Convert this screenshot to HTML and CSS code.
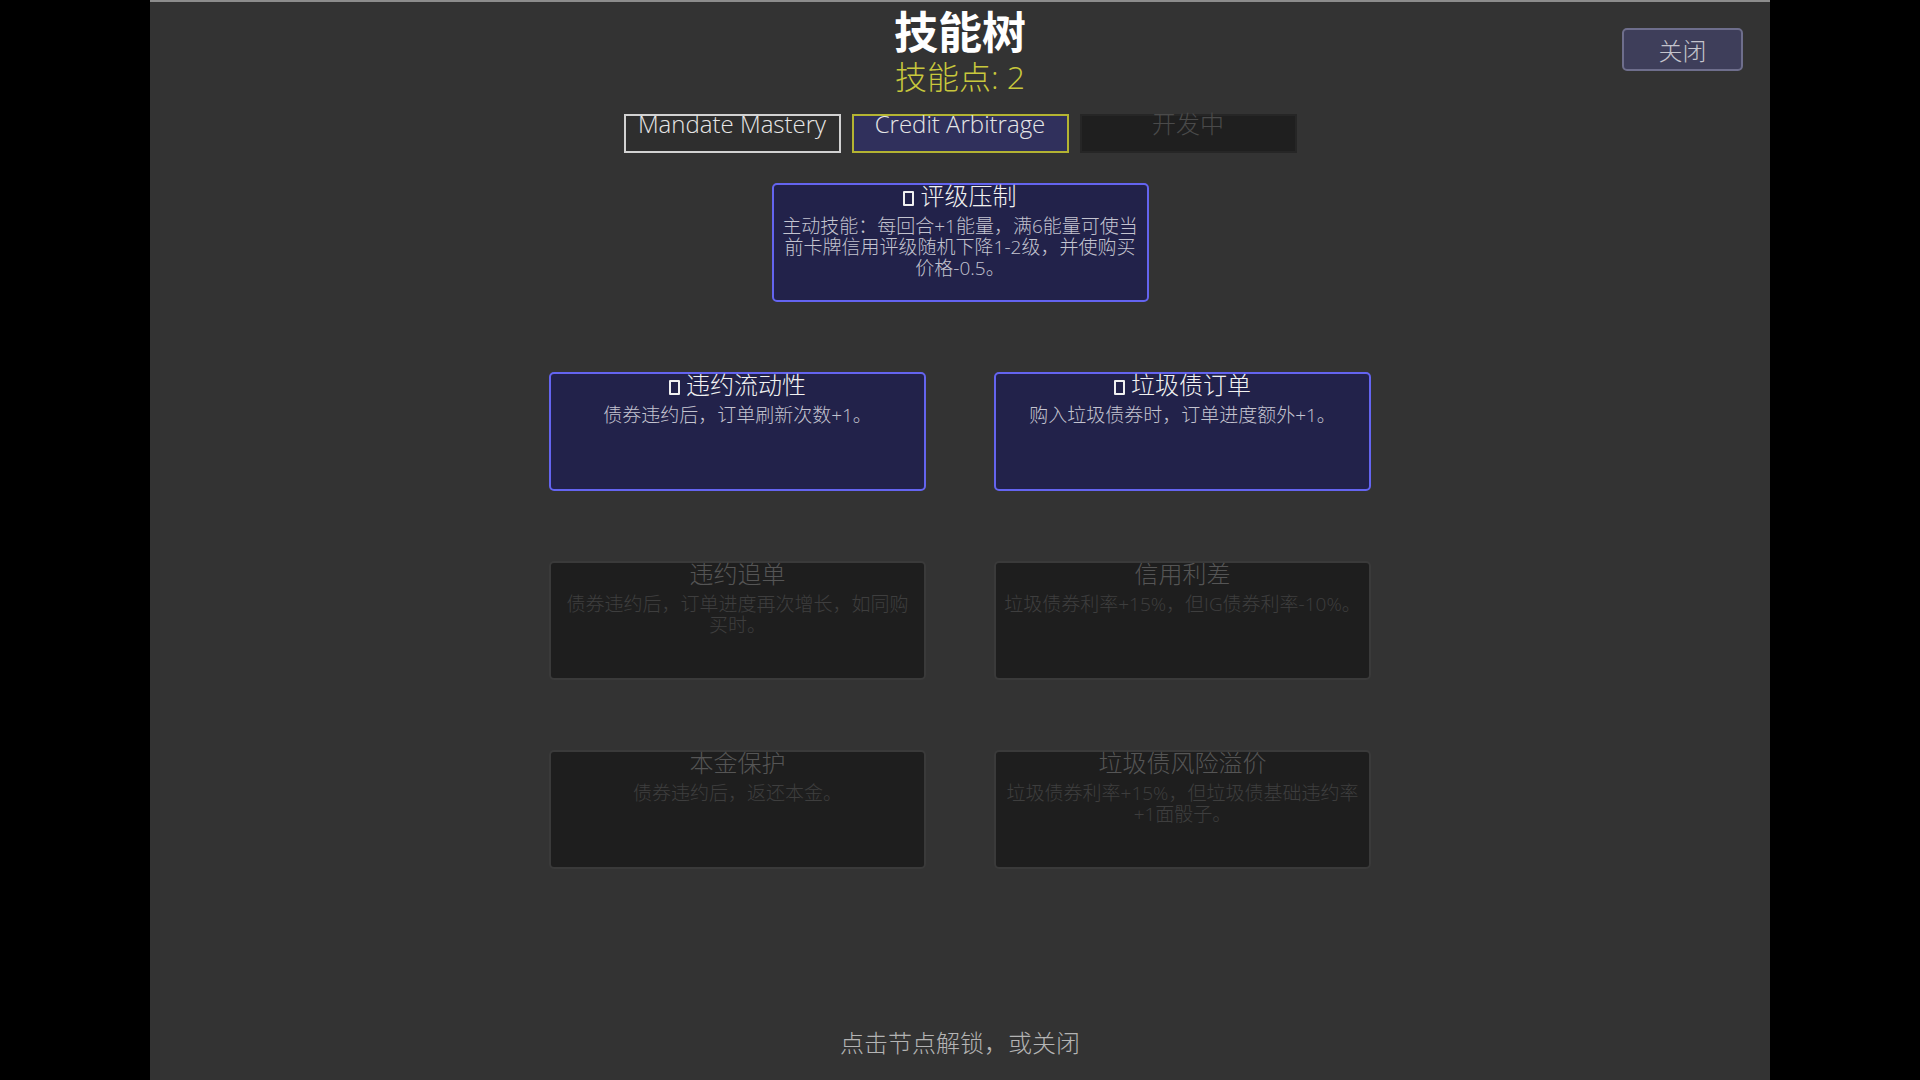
FILE: index.html
```html
<!DOCTYPE html>
<html lang="zh-CN">
<head>
<meta charset="utf-8">
<title>技能树</title>
<link rel="stylesheet" href="styles.css">
</head>
<body>
<div class="stage">
  <main class="panel">
    <header class="header">
      <div class="header-side"></div>
      <div class="header-center">
        <h1 class="title">技能树</h1>
        <div class="points">技能点: 2</div>
      </div>
      <div class="header-side header-right">
        <button class="close-btn">关闭</button>
      </div>
    </header>

    <nav class="tabs">
      <div class="tab tab-normal">Mandate Mastery</div>
      <div class="tab tab-active">Credit Arbitrage</div>
      <div class="tab tab-disabled">开发中</div>
    </nav>

    <section class="tree">
      <div class="node node-open node-root">
        <div class="node-title"><span class="tofu"></span> 评级压制</div>
        <div class="node-desc">主动技能：每回合+1能量，满6能量可使当前卡牌信用评级随机下降1-2级，并使购买价格-0.5。</div>
      </div>

      <div class="node node-open">
        <div class="node-title"><span class="tofu"></span> 违约流动性</div>
        <div class="node-desc">债券违约后，订单刷新次数+1。</div>
      </div>
      <div class="node node-open">
        <div class="node-title"><span class="tofu"></span> 垃圾债订单</div>
        <div class="node-desc">购入垃圾债券时，订单进度额外+1。</div>
      </div>

      <div class="node node-locked">
        <div class="node-title">违约追单</div>
        <div class="node-desc">债券违约后，订单进度再次增长，如同购买时。</div>
      </div>
      <div class="node node-locked">
        <div class="node-title">信用利差</div>
        <div class="node-desc">垃圾债券利率+15%，但IG债券利率-10%。</div>
      </div>

      <div class="node node-locked">
        <div class="node-title">本金保护</div>
        <div class="node-desc">债券违约后，返还本金。</div>
      </div>
      <div class="node node-locked">
        <div class="node-title">垃圾债风险溢价</div>
        <div class="node-desc">垃圾债券利率+15%，但垃圾债基础违约率+1面骰子。</div>
      </div>
    </section>

    <footer class="hint">点击节点解锁，或关闭</footer>
  </main>
</div>
</body>
</html>
```

FILE: styles.css
```css
html, body {
  margin: 0;
  padding: 0;
  background: #000;
}

body {
  font-family: "Open Sans", "Noto Sans CJK SC", sans-serif;
  color: #fff;
}

.stage {
  width: 1920px;
  height: 1080px;
  display: flex;
  justify-content: center;
  background: #000;
}

.panel {
  width: 1620px;
  height: 1080px;
  box-sizing: border-box;
  background: #333333;
  border-top: 2px solid #8c8c8c;
  display: flex;
  flex-direction: column;
  align-items: center;
}

.header {
  width: 100%;
  display: grid;
  grid-template-columns: 1fr auto 1fr;
}

.header-center {
  display: flex;
  flex-direction: column;
  align-items: center;
  padding-top: 5px;
}

.header-right {
  display: flex;
  justify-content: flex-end;
  align-items: flex-start;
  padding-right: 27px;
  padding-top: 26px;
}

.title {
  margin: 0;
  font-family: "Noto Sans CJK SC", sans-serif;
  font-size: 44px;
  line-height: 46px;
  font-weight: 700;
  color: #ffffff;
}

.points {
  margin-top: 8px;
  font-size: 32px;
  line-height: 32px;
  font-weight: 300;
  color: #c8c83c;
}

.close-btn {
  width: 121px;
  height: 43px;
  box-sizing: border-box;
  background: #3e3e5a;
  border: 2px solid #6e6e8c;
  border-radius: 5px;
  color: #c4c4cc;
  font-family: "Noto Sans CJK SC", sans-serif;
  font-size: 24px;
  font-weight: 300;
  line-height: 36px;
  padding: 0;
}

.tabs {
  margin-top: 21px;
  display: flex;
  gap: 11px;
}

.tab {
  width: 217px;
  height: 39px;
  box-sizing: border-box;
  text-align: center;
  font-size: 24px;
  font-weight: 300;
  line-height: 15px;
  color: #e6e6e6;
  overflow: visible;
}

.tab-normal {
  border: 2px solid #d2d2d2;
  background: #2e2e2e;
}

.tab-active {
  border: 2px solid #b4b432;
  background: #30305c;
}

.tab-disabled {
  border: 2px solid #262626;
  background: #1f1f1f;
  color: #4a4a4a;
}

.tree {
  margin-top: 30px;
  display: grid;
  grid-template-columns: 377px 377px;
  grid-auto-rows: 119px;
  column-gap: 68px;
  row-gap: 70px;
}

.node {
  box-sizing: border-box;
  border-radius: 5px;
  padding: 0 7px;
  text-align: center;
}

.node-root {
  grid-column: 1 / -1;
  justify-self: center;
  width: 377px;
}

.node-open {
  background: #22224a;
  border: 2px solid #6464f0;
}

.node-locked {
  background: #1e1e1e;
  border: 2px solid #3a3a3a;
}

.node-title {
  font-size: 24px;
  line-height: 22px;
  font-weight: 300;
}

.node-open .node-title {
  color: #f2f2f2;
}

.node-locked .node-title {
  color: #555555;
}

.node-desc {
  margin-top: 9px;
  font-size: 19px;
  line-height: 21px;
  font-weight: 300;
}

.node-open .node-desc {
  color: #c4c4d0;
}

.node-locked .node-desc {
  color: #3e3e3e;
}

.tofu {
  display: inline-block;
  width: 11px;
  height: 15px;
  box-sizing: border-box;
  border: 2px solid #f0f0f0;
  border-radius: 1px;
  vertical-align: -1px;
}

.hint {
  margin-top: auto;
  margin-bottom: 24px;
  font-family: "Noto Sans CJK SC", sans-serif;
  font-size: 24px;
  font-weight: 300;
  line-height: 28px;
  color: #b4b4b4;
}
```
